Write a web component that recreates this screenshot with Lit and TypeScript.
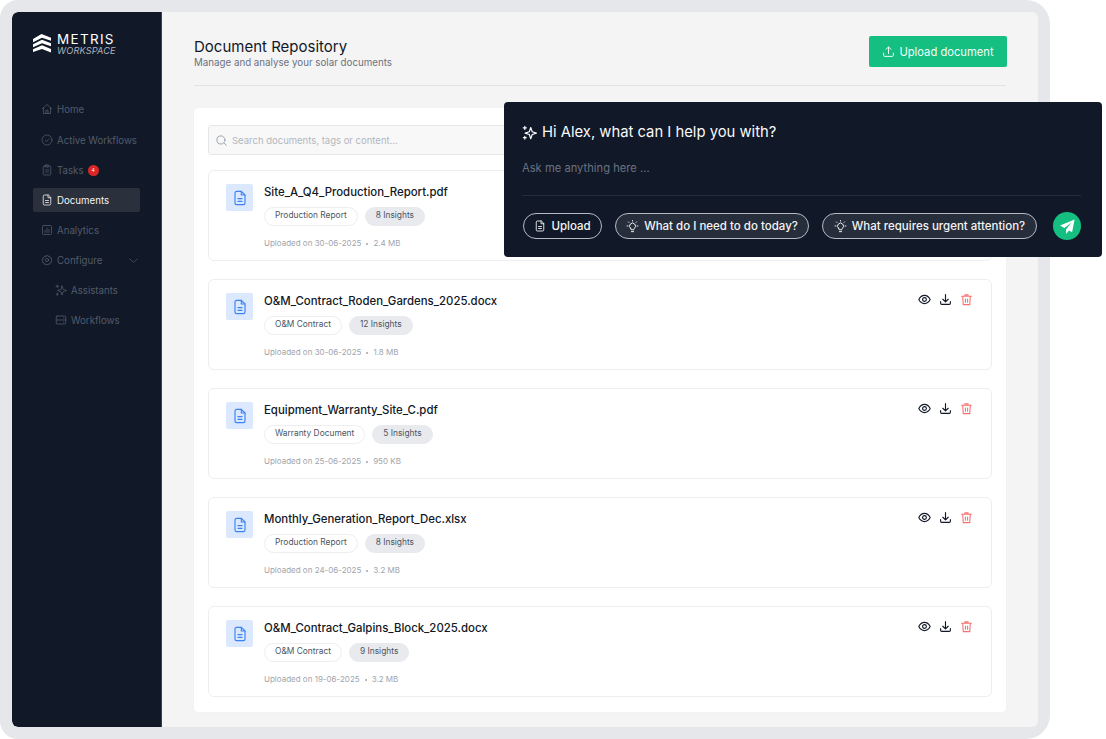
import { LitElement, html, css, svg } from "lit";
import { customElement } from "lit/decorators.js";

const ic = (body: unknown, size = 13, cls = "", sw = 1.8) => html`<svg class=${cls} width=${size} height=${size} viewBox="0 0 24 24" fill="none" stroke="currentColor" stroke-width=${sw} stroke-linecap="round" stroke-linejoin="round">${body}</svg>`;

const I = {
  home: svg`<path d="M2.500 11.500L12 3l9.500 8.500"/><path d="M5 9.500V21h14V9.500"/><path d="M10 21v-6.500h4V21"/>`,
  check: svg`<circle cx="12" cy="12" r="10"/><path d="M8.500 12.500l2.500 2.500 4.500-5"/>`,
  clip: svg`<rect x="4.500" y="4" width="15" height="18" rx="2"/><rect x="8.500" y="2" width="7" height="4" rx="1"/><path d="M9 12h6M9 16h6"/>`,
  file: svg`<path d="M14 2H7a2.500 2.500 0 0 0-2.500 2.500v15A2.500 2.500 0 0 0 7 22h10a2.500 2.500 0 0 0 2.500-2.500V7.500z"/><path d="M14 2v5.500h5.500"/><path d="M9 13h6M9 17h6"/>`,
  chart: svg`<rect x="3" y="3" width="18" height="18" rx="2"/><path d="M8 17v-4M12 17V8M16 17v-6"/>`,
  gear: svg`<circle cx="12" cy="12" r="3.200"/><path d="M12 2.500l2 2.300 3-.5 1 2.900 2.900 1-.5 3 1.600 1-1.600 2 .5 2.600-2.900 1-1 2.900-3-.5-2 1.800-2-1.800-3 .5-1-2.900-2.900-1 .5-2.600-1.600-2 1.600-1-.5-3 2.900-1 1-2.900 3 .5z"/>`,
  chev: svg`<path d="M4 8.500l8 8 8-8"/>`,
  spark: svg`<path d="M14 4l2.300 6.700L23 13l-6.700 2.300L14 22l-2.300-6.700L5 13l6.700-2.300z"/><path d="M4.500 2v5M2 4.500h5M4.500 18v4.500M2.300 20.300h4.400"/>`,
  server: svg`<rect x="2.500" y="4" width="19" height="16" rx="2"/><path d="M2.500 12h19M17 8h.01M17 16h.01"/>`,
  upload: svg`<path d="M12 16V3.500M7.500 8L12 3.500 16.500 8"/><path d="M3 15v4a2 2 0 0 0 2 2h14a2 2 0 0 0 2-2v-4"/>`,
  search: svg`<circle cx="11" cy="11" r="7.500"/><path d="M21 21l-4.500-4.500"/>`,
  eye: svg`<path d="M1.500 12S5.500 4.500 12 4.500 22.500 12 22.500 12 18.500 19.500 12 19.500 1.500 12 1.500 12z"/><circle cx="12" cy="12" r="3.500"/>`,
  down: svg`<path d="M12 3v13M7 11.500l5 5 5-5"/><path d="M3 16v3a2 2 0 0 0 2 2h14a2 2 0 0 0 2-2v-3"/>`,
  trash: svg`<path d="M3 6h18M9 6V3.500h6V6"/><path d="M5 6l1 15.500h12L19 6"/><path d="M10 11v6M14 11v6"/>`,
  bulb: svg`<path d="M8.500 15.500a5.500 5.500 0 1 1 7 0c-.7.600-1 1.200-1 2v.5h-5v-.5c0-.8-.3-1.400-1-2z"/><path d="M10 21.500h4M12 1v1M2 11h1.500M20.500 11H22M4.500 3.500l1 1M19.500 3.500l-1 1"/>`,
};

const nav = [
  { label: "Home", icon: I.home },
  { label: "Active Workflows", icon: I.check },
  { label: "Tasks", icon: I.clip, badge: true },
  { label: "Documents", icon: I.file, active: true },
  { label: "Analytics", icon: I.chart },
  { label: "Configure", icon: I.gear, chevron: true },
  { label: "Assistants", icon: I.spark, sub: true },
  { label: "Workflows", icon: I.server, sub: true },
];

const docs = [
  { name: "Site_A_Q4_Production_Report.pdf", tag: "Production Report", ins: "8 Insights", date: "30-06-2025", size: "2.4 MB" },
  { name: "O&M_Contract_Roden_Gardens_2025.docx", tag: "O&M Contract", ins: "12 Insights", date: "30-06-2025", size: "1.8 MB" },
  { name: "Equipment_Warranty_Site_C.pdf", tag: "Warranty Document", ins: "5 Insights", date: "25-06-2025", size: "950 KB" },
  { name: "Monthly_Generation_Report_Dec.xlsx", tag: "Production Report", ins: "8 Insights", date: "24-06-2025", size: "3.2 MB" },
  { name: "O&M_Contract_Galpins_Block_2025.docx", tag: "O&M Contract", ins: "9 Insights", date: "19-06-2025", size: "3.2 MB" },
];

@customElement("app-root")
export class AppRoot extends LitElement {
  static styles = css`
    :host { display: block; width: 1106px; height: 739px; position: relative; overflow: hidden; background: #fff; font-family: Inter, "Liberation Sans", sans-serif; color: #111827; }
    * { box-sizing: border-box; }
    svg { display: block; flex: none; }
    .frame { width: 1050px; height: 739px; padding: 12px; background: #e5e7eb; border-radius: 18px 24px 24px 18px; }
    .window { display: flex; height: 715px; background: #f4f4f5; border-radius: 6px; overflow: hidden; }
    .side { width: 150px; flex: none; background: #111827; border-right: 1px solid #3a4252; padding: 21px 21px 0; border-radius: 6px 0 0 6px; }
    .logo { display: flex; align-items: center; gap: 6px; height: 22px; color: #fff; }
    .logo-text { display: flex; flex-direction: column; gap: 1px; padding-top: 1px; }
    .metris { font-size: 13.500px; line-height: 11px; font-weight: 400; letter-spacing: 1.3px; }
    .workspace { font-size: 9.200px; line-height: 10px; font-style: italic; color: #aeb3bc; letter-spacing: 0.15px; }
    .nav { display: flex; flex-direction: column; gap: 6px; margin-top: 43px; }
    .item { display: flex; align-items: center; height: 24px; padding-left: 8px; gap: 4px; border-radius: 2px; font-size: 9.700px; color: #525b6a; }
    .item:first-child { margin-top: -1px; margin-bottom: 1px; }
    .item.sub { padding-left: 22px; }
    .item.active { background: #2a303c; color: #f3f4f6; }
    .badge { width: 11px; height: 11px; border-radius: 50%; background: #dc2626; color: #fff; font-size: 5px; display: flex; align-items: center; justify-content: center; margin-left: 0; }
    .chev { margin-left: auto; margin-right: 1px; }
    .main { flex: 1; min-width: 0; padding: 24px 32px 0; }
    .head { display: flex; justify-content: space-between; align-items: flex-start; height: 50px; border-bottom: 1px solid #e1e3e7; }
    .titles { padding-top: 2px; }
    h1 { margin: 0; font-size: 15px; line-height: 18px; font-weight: 400; color: #111827; }
    .subtitle { font-size: 9.750px; line-height: 12px; margin-top: 1px; color: #6b7280; }
    .upload { display: flex; align-items: center; justify-content: center; gap: 4px; width: 138px; height: 31px; margin-right: -1px; background: #15bf81; color: #f2fdf8; border-radius: 2px; font-size: 11.200px; }
    .panel { margin-top: 22px; background: #fff; border-radius: 4px; padding: 17px 14px 15px 14px; display: flex; flex-direction: column; gap: 15px; box-shadow: 0 0 1px rgba(0,0,0,.08); }
    .search { display: flex; align-items: center; gap: 4px; height: 30px; padding: 0 6px; background: #f8f8f9; border: 1px solid #e5e7eb; border-radius: 3px; font-size: 9.500px; color: #b3b7bd; }
    .search svg { color: #9ca3af; }
    .list { display: flex; flex-direction: column; gap: 18px; }
    .card { display: flex; gap: 11px; height: 91px; padding: 13px 18px 0 17px; border: 1px solid #eceef0; border-radius: 6px; background: #fff; }
    .fileicon { width: 27px; height: 27px; background: #dbe8fd; border-radius: 2px; display: flex; align-items: center; justify-content: center; color: #3b82f6; flex: none; }
    .info { flex: 1; min-width: 0; padding-top: 1px; }
    .name { font-size: 11.400px; line-height: 14px; font-weight: 500; color: #111827; }
    .tags { display: flex; gap: 7px; margin-top: 8px; }
    .tag { height: 19px; line-height: 15px; padding: 0 10px; border-radius: 10px; font-size: 8.400px; color: #4b5563; border: 1px solid #eceef0; background: #fff; }
    .tag.ins { background: #e9eaee; border-color: #e9eaee; }
    .meta { display: flex; align-items: center; gap: 5px; margin-top: 12px; font-size: 8px; line-height: 11px; color: #a1a5ad; }
    .dot { width: 2px; height: 2px; border-radius: 50%; background: #9ca3af; }
    .actions { display: flex; gap: 8px; color: #111827; align-items: flex-start; }
    .trash { color: #f87171; }
    .chat { position: absolute; left: 504px; top: 102px; width: 598px; height: 155px; background: #111827; border-radius: 4px; padding: 21px 21px 0 18px; color: #fff; }
    .hi { display: flex; align-items: center; gap: 5px; height: 18px; font-size: 14.800px; color: #f9fafb; }
    .ask { margin-top: 20px; font-size: 11.200px; line-height: 14px; color: #6b7280; }
    .rule { height: 1px; background: #262d3a; margin-top: 20px; }
    .chips { display: flex; align-items: center; margin-top: 16px; gap: 13px; padding-left: 1px; }
    .chip { display: flex; align-items: center; justify-content: center; gap: 5px; height: 26px; border: 1px solid #b6bac2; border-radius: 13px; font-size: 11.500px; font-weight: 500; color: #f3f4f6; background: #272e3b; }
    .chip.plain { background: transparent; width: 79px; }
    .w1 { width: 194px; }
    .w2 { width: 215px; }
    .send { width: 28px; height: 28px; border-radius: 50%; background: #15bf81; display: flex; align-items: center; justify-content: center; margin-left: 3px; }
  `;

  render() {
    return html`
      <div class="frame">
        <div class="window">
          <aside class="side">
            <div class="logo">
              <svg width="18" height="20" viewBox="0 0 18 20" fill="#fff"><path d="M0 5L8.500 0 18 3.800v3L9 3.800 0 8.200z"/><path d="M0 10.200L9 5.800 18 9.200v3L9 9.300 0 13.200z"/><path d="M0 15.200L9 11.300 18 15v3.500L9 15 0 18z"/></svg>
              <div class="logo-text"><span class="metris">METRIS</span><span class="workspace">WORKSPACE</span></div>
            </div>
            <nav class="nav">
              ${nav.map((n) => html`
                <div class="item ${n.active ? "active" : ""} ${n.sub ? "sub" : ""}">
                  ${ic(n.icon, 12, "", 1.6)}<span>${n.label}</span>
                  ${n.badge ? html`<span class="badge">4</span>` : ""}
                  ${n.chevron ? ic(I.chev, 11, "chev", 1.6) : ""}
                </div>`)}
            </nav>
          </aside>
          <main class="main">
            <header class="head">
              <div class="titles">
                <h1>Document Repository</h1>
                <div class="subtitle">Manage and analyse your solar documents</div>
              </div>
              <div class="upload">${ic(I.upload, 13)}<span>Upload document</span></div>
            </header>
            <section class="panel">
              <div class="search">${ic(I.search, 13)}<span>Search documents, tags or content...</span></div>
              <div class="list">
                ${docs.map((d) => html`
                  <article class="card">
                    <div class="fileicon">${ic(I.file, 16, "", 1.7)}</div>
                    <div class="info">
                      <div class="name">${d.name}</div>
                      <div class="tags"><span class="tag">${d.tag}</span><span class="tag ins">${d.ins}</span></div>
                      <div class="meta"><span>Uploaded on ${d.date}</span><span class="dot"></span><span>${d.size}</span></div>
                    </div>
                    <div class="actions">
                      ${ic(I.eye, 13, "", 2.1)}${ic(I.down, 13, "", 2.1)}${ic(I.trash, 13, "trash", 2)}
                    </div>
                  </article>`)}
              </div>
            </section>
          </main>
        </div>
      </div>
      <div class="chat">
        <div class="hi">${ic(I.spark, 15, "", 1.9)}<span>Hi Alex, what can I help you with?</span></div>
        <div class="ask">Ask me anything here ...</div>
        <div class="rule"></div>
        <div class="chips">
          <div class="chip plain">${ic(I.file, 12)}<span>Upload</span></div>
          <div class="chip w1">${ic(I.bulb, 13)}<span>What do I need to do today?</span></div>
          <div class="chip w2">${ic(I.bulb, 13)}<span>What requires urgent attention?</span></div>
          <div class="send"><svg width="17" height="17" viewBox="0 0 24 24" fill="#fff"><path d="M22 2L1.500 10.500 7.500 14 18 6.500 10 16v6.500l4-5 4.500 2.500z"/></svg></div>
        </div>
      </div>
    `;
  }
}
